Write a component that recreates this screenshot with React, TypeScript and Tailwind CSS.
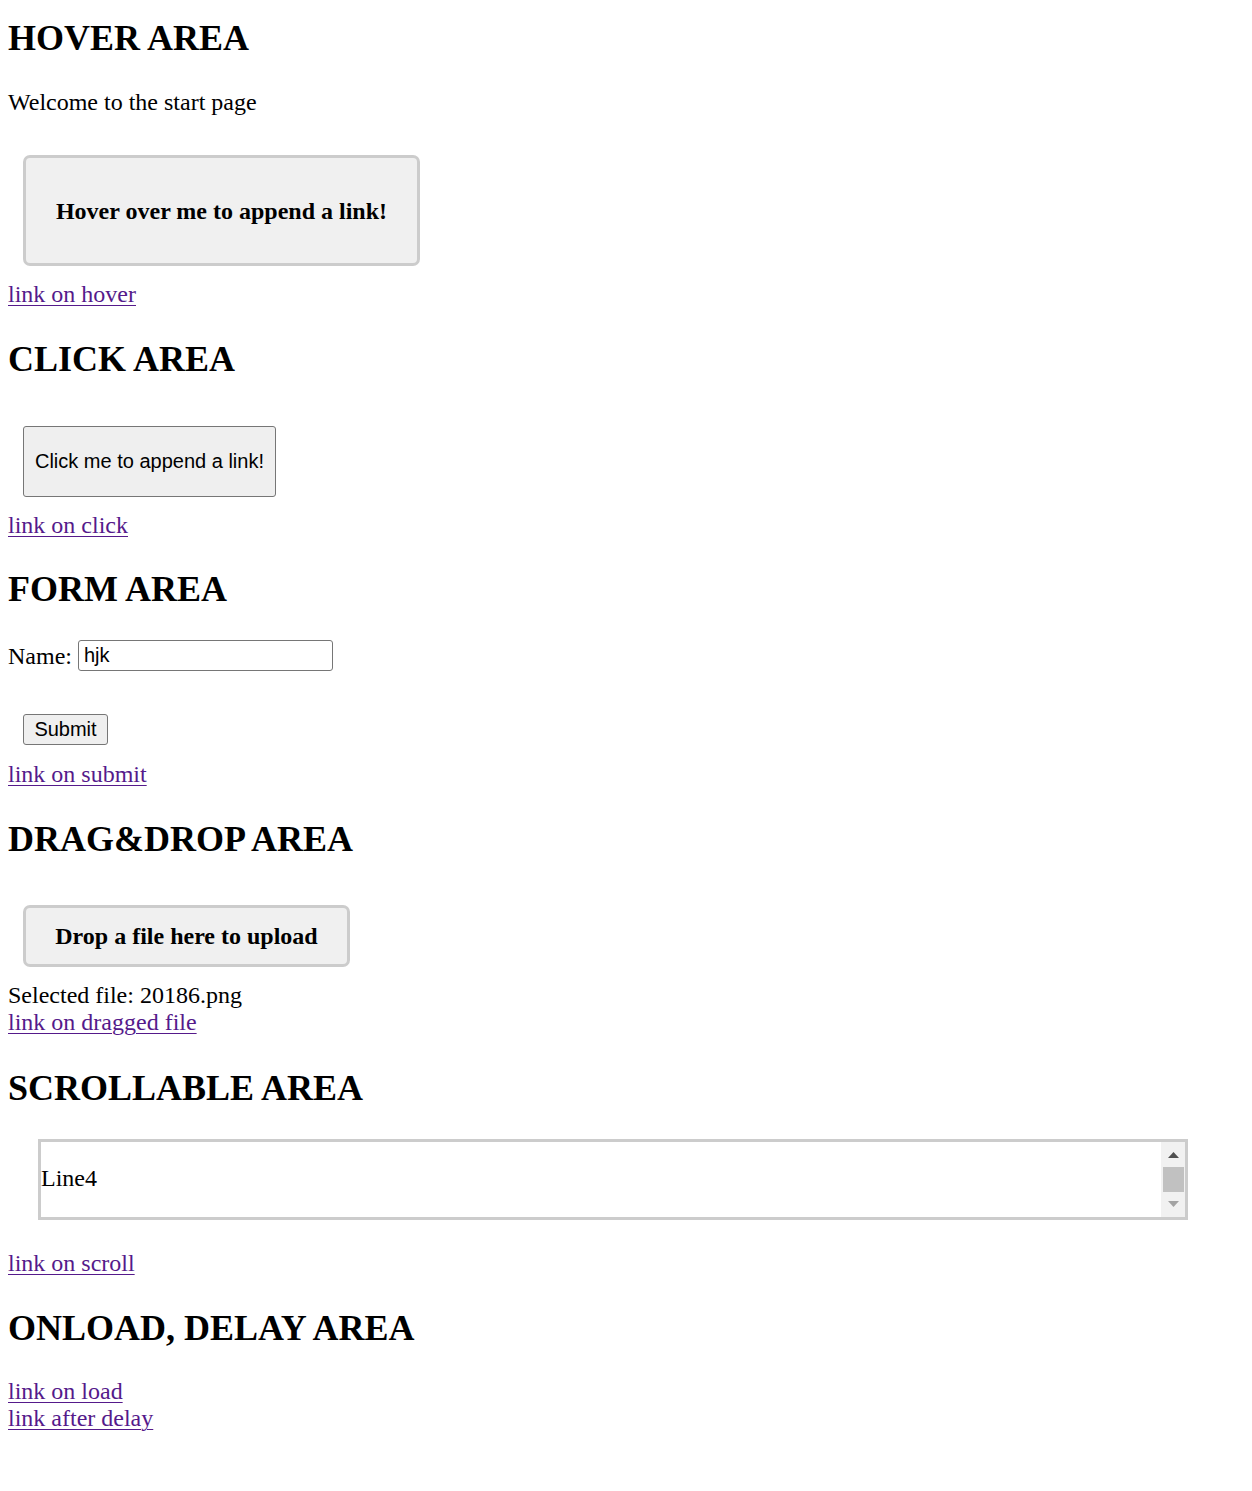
import React from 'react';

const serif = "font-['Liberation_Serif','Times_New_Roman',serif]";
const sans = "font-['Liberation_Sans',Arial,sans-serif]";

const Heading: React.FC<{ children: React.ReactNode; className?: string }> = ({ children, className }) => (
  <h2 className={`text-[36px] font-bold leading-[41px] text-black ${className ?? ''}`}>{children}</h2>
);

const Link: React.FC<{ children: React.ReactNode; className?: string }> = ({ children, className }) => (
  <a href="#" className={`block w-fit text-[#551a8b] underline underline-offset-[3px] decoration-1 ${className ?? ''}`}>
    {children}
  </a>
);

export default function App() {
  return (
    <div className={`${serif} bg-white text-black text-[24px] leading-[28px] min-h-[1491px] px-2 flex flex-col items-start`}>
      {/* Hover area */}
      <Heading className="mt-[18px]">HOVER AREA</Heading>
      <p className="mt-[29px]">Welcome to the start page</p>
      <div className="mt-[39px] ml-[15px] w-[397px] h-[111px] border-[3px] border-[#cccccc] rounded-[7px] bg-[#f0f0f0] flex items-center justify-center font-bold">
        Hover over me to append a link!
      </div>
      <Link className="mt-[14px]">link on hover</Link>

      {/* Click area */}
      <Heading className="mt-[31px]">CLICK AREA</Heading>
      <button className={`${sans} mt-[46px] ml-[15px] h-[71px] w-[253px] border border-[#767676] rounded-[3px] bg-[#efefef] text-[20px] leading-[23px] text-black flex items-center justify-center`}>
        Click me to append a link!
      </button>
      <Link className="mt-[14px]">link on click</Link>

      {/* Form area */}
      <Heading className="mt-[30px]">FORM AREA</Heading>
      <div className="mt-[30px] flex items-center gap-[6px] h-[31px]">
        <span>Name:</span>
        <input
          type="text"
          defaultValue="hjk"
          className={`${sans} w-[255px] h-[31px] border border-[#767676] rounded-[3px] px-[5px] text-[20px] text-black bg-white outline-none`}
        />
      </div>
      <button className={`${sans} mt-[43px] ml-[15px] h-[31px] w-[85px] border border-[#767676] rounded-[3px] bg-[#efefef] text-[20px] leading-[23px] text-black flex items-center justify-center`}>
        Submit
      </button>
      <Link className="mt-[15px]">link on submit</Link>

      {/* Drag & drop area */}
      <Heading className="mt-[31px]">DRAG&amp;DROP AREA</Heading>
      <div className="mt-[45px] ml-[15px] w-[327px] h-[62px] border-[3px] border-[#cccccc] rounded-[7px] bg-[#f0f0f0] flex items-center justify-center font-bold">
        Drop a file here to upload
      </div>
      <p className="mt-[15px] leading-[27px]">Selected file: 20186.png</p>
      <Link className="leading-[27px]">link on dragged file</Link>

      {/* Scrollable area */}
      <Heading className="mt-[32px]">SCROLLABLE AREA</Heading>
      <div className="mt-[30px] ml-[30px] w-[1150px] h-[81px] border-[3px] border-[#cccccc] bg-white flex">
        <div className="flex-1 overflow-hidden pt-[22px]">Line4</div>
        <div className="w-[24px] bg-[#f1f1f1] flex flex-col items-center">
          <svg width="11" height="6" viewBox="0 0 11 6" className="mt-[10px]">
            <polygon points="0,6 11,6 5.5,0" fill="#505050" />
          </svg>
          <div className="mt-[9px] w-[21px] h-[25px] bg-[#c1c1c1]" />
          <svg width="11" height="6" viewBox="0 0 11 6" className="mt-[9px]">
            <polygon points="0,0 11,0 5.5,6" fill="#a3a3a3" />
          </svg>
        </div>
      </div>
      <Link className="mt-[29px]">link on scroll</Link>

      {/* Onload / delay area */}
      <Heading className="mt-[31px]">ONLOAD, DELAY AREA</Heading>
      <Link className="mt-[29px] leading-[27px]">link on load</Link>
      <Link className="leading-[27px]">link after delay</Link>
    </div>
  );
}
